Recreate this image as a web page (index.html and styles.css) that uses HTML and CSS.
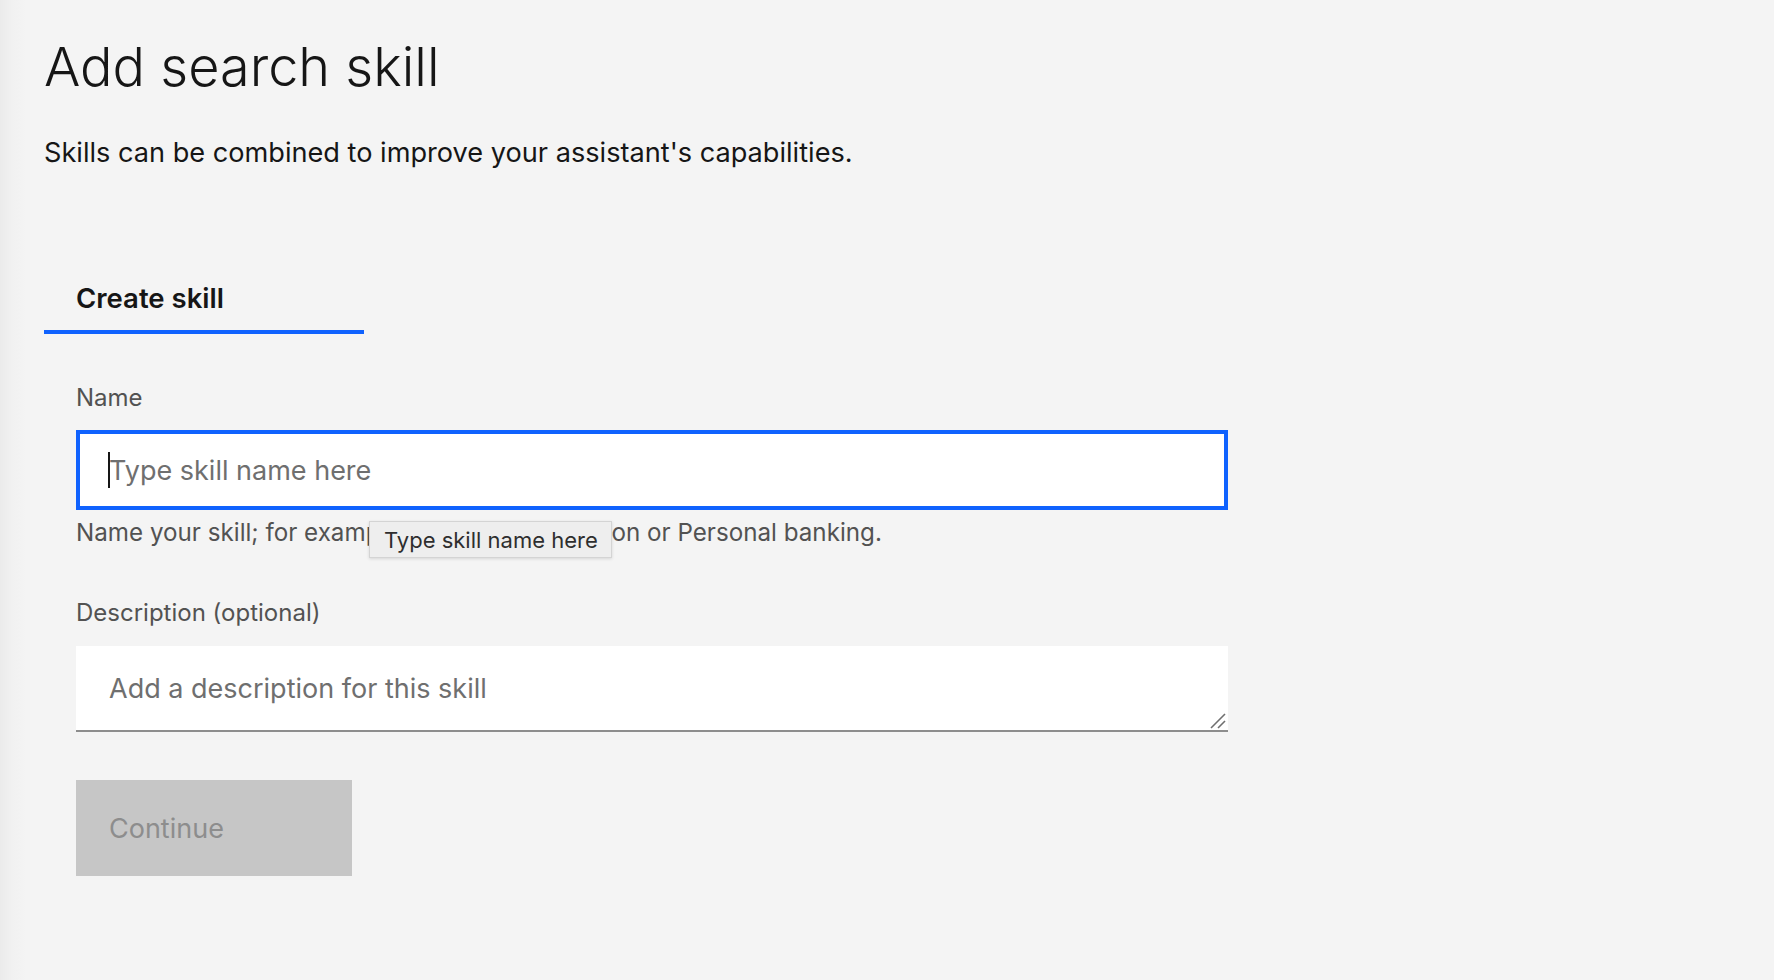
FILE: index.html
```html
<!DOCTYPE html>
<html lang="en">
<head>
<meta charset="utf-8">
<title>Add search skill</title>
<link rel="stylesheet" href="styles.css">
</head>
<body>
<main class="page">
  <h1 class="title">Add search skill</h1>
  <p class="subtitle">Skills can be combined to improve your assistant's capabilities.</p>

  <div class="tabs">
    <div class="tab tab-active">Create skill</div>
  </div>

  <form class="form">
    <div class="field">
      <label class="label" for="name">Name</label>
      <div class="input-wrap">
        <input class="input" id="name" type="text" placeholder="Type skill name here">
        <span class="caret"></span>
      </div>
      <div class="helper">Name your skill; for example, Product information or Personal banking.</div>
      <div class="tooltip">Type skill name here</div>
    </div>

    <div class="field field-desc">
      <label class="label" for="desc">Description (optional)</label>
      <div class="textarea-wrap">
        <textarea class="textarea" id="desc" placeholder="Add a description for this skill"></textarea>
        <svg class="grip" width="16" height="16" viewBox="0 0 16 16" aria-hidden="true">
          <line x1="1" y1="15" x2="15" y2="1" stroke="#6f6f6f" stroke-width="1.6"/>
          <line x1="8" y1="15" x2="15" y2="8" stroke="#6f6f6f" stroke-width="1.6"/>
        </svg>
      </div>
    </div>

    <button class="btn" type="button" disabled>Continue</button>
  </form>
</main>
</body>
</html>
```
FILE: styles.css
```css
* { box-sizing: border-box; }

html, body {
  margin: 0;
  height: 100%;
}

body {
  background: linear-gradient(to right, #ebebeb 0, #f1f1f1 12px, #f4f4f4 26px);
  font-family: Inter, "Noto Sans", "Liberation Sans", sans-serif;
  color: #161616;
}

.page {
  padding: 35px 0 0 44px;
}

.title {
  margin: 0;
  font-size: 54px;
  line-height: 64px;
  font-weight: 300;
  letter-spacing: 0;
}

.subtitle {
  margin: 38px 0 0;
  font-size: 27.15px;
  line-height: 32px;
  font-weight: 400;
}

.tabs {
  display: flex;
  margin-top: 114px;
}

.tab {
  width: 320px;
  padding: 0 0 17px 32px;
  font-size: 27.5px;
  line-height: 30px;
  font-weight: 600;
  border-bottom: 4px solid transparent;
}

.tab-active {
  border-bottom-color: #0f62fe;
}

.form {
  display: flex;
  flex-direction: column;
  align-items: flex-start;
  padding-left: 32px;
  width: 1184px;
}

.field {
  position: relative;
  display: flex;
  flex-direction: column;
  width: 1152px;
  margin-top: 50px;
}

.field-desc {
  margin-top: 52px;
}

.label {
  font-size: 24px;
  line-height: 28px;
  color: #525252;
}

.input-wrap {
  position: relative;
  margin-top: 18px;
}

.input {
  display: block;
  width: 100%;
  height: 80px;
  border: 4px solid #0f62fe;
  background: #ffffff;
  padding: 0 29px;
  font-family: inherit;
  font-size: 27px;
  color: #161616;
  outline: none;
}

.input::placeholder,
.textarea::placeholder {
  color: #6f6f6f;
  opacity: 1;
}

.caret {
  position: absolute;
  left: 32px;
  top: 22px;
  width: 2px;
  height: 36px;
  background: #161616;
}

.helper {
  margin-top: 9px;
  font-size: 24.2px;
  line-height: 28px;
  color: #525252;
  white-space: nowrap;
}

.tooltip {
  position: absolute;
  left: 293px;
  top: 137px;
  height: 37px;
  padding: 0 13px 0 14px;
  display: flex;
  align-items: center;
  background: #eeeeee;
  border: 1px solid #d4d4d4;
  box-shadow: 0 1px 3px rgba(0, 0, 0, 0.12);
  font-family: Inter, "Liberation Sans", sans-serif;
  font-size: 22px;
  color: #2e2e2e;
  white-space: nowrap;
}

.textarea-wrap {
  position: relative;
  margin-top: 19px;
}

.textarea {
  display: block;
  width: 100%;
  height: 86px;
  border: none;
  border-bottom: 2px solid #8d8d8d;
  background: #ffffff;
  padding: 26px 33px 0;
  font-family: inherit;
  font-size: 27px;
  line-height: 34px;
  color: #161616;
  resize: none;
  outline: none;
}

.grip {
  position: absolute;
  right: 2px;
  bottom: 3px;
}

.btn {
  margin-top: 48px;
  width: 276px;
  height: 96px;
  border: none;
  background: #c6c6c6;
  color: #8d8d8d;
  font-family: inherit;
  font-size: 27px;
  text-align: left;
  padding: 0 33px;
  cursor: not-allowed;
}
```
